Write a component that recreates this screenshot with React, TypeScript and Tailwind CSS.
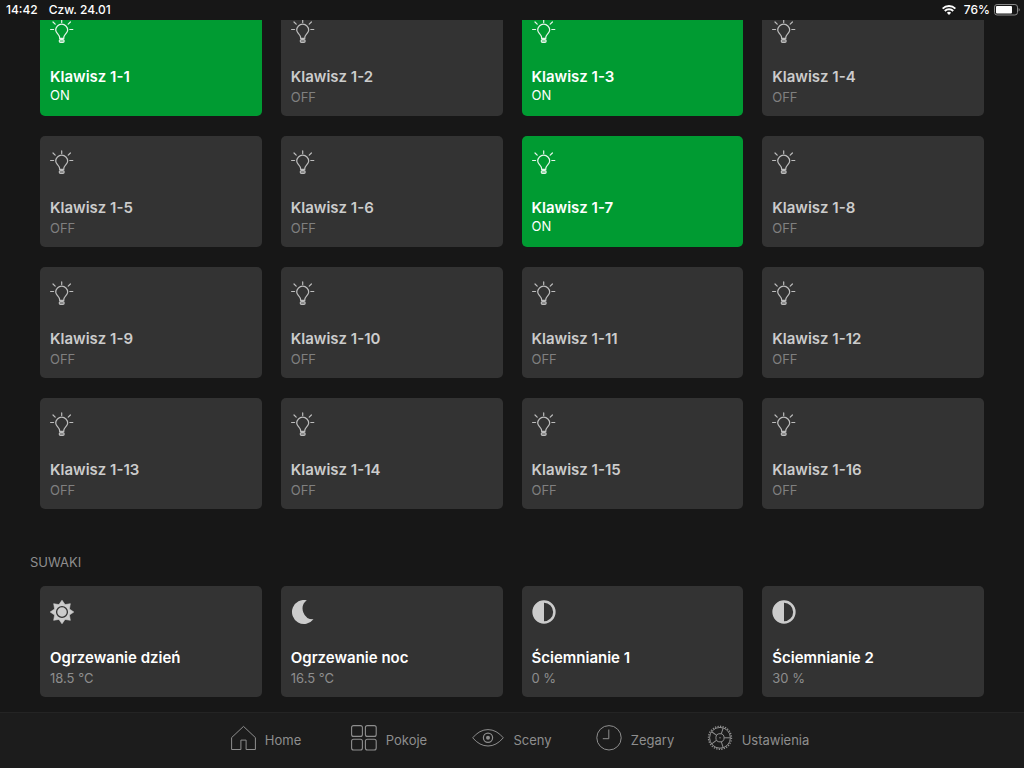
import { useState } from 'react'
import clsx from 'clsx'

interface KeyTile {
  id: number
  name: string
  on: boolean
}

interface SliderTile {
  name: string
  value: string
  icon: () => React.ReactNode
}

const initialKeys: KeyTile[] = Array.from({ length: 16 }, (_, i) => ({
  id: i + 1,
  name: `Klawisz 1-${i + 1}`,
  on: [1, 3, 7].includes(i + 1)
}))

const gearSpokes = [0, 72, 144, 216, 288]

function BulbIcon() {
  return (
    <svg viewBox="0 -0.8 24 24" className="w-6 h-6 opacity-90" fill="none" stroke="currentColor" strokeWidth="1.2" strokeLinecap="round" strokeLinejoin="round">
      <path d="M9.6 18.6v-.8c0-1.5-.9-2.5-2-3.8A6 6.1 0 0 1 5.7 10.4 6 6 0 0 1 17.7 10.4 6 6.1 0 0 1 15.8 14c-1.1 1.3-2 2.3-2 3.8v.8z" />
      <rect x="9.3" y="19.8" width="4.8" height="2.8" rx="1.1" />
      <path d="M11.7.1v2.5M.6 9.7h3M19.8 9.7h3M3 2.2l2.2 2.2M20.4 2.2l-2.2 2.2" />
      <path d="M9.9 21.2h3.6" />
    </svg>
  )
}

function SunIcon() {
  const points = Array.from({ length: 16 }, (_, i) => {
    const r = i % 2 === 0 ? 11.8 : 8
    const a = (i * Math.PI) / 8
    return `${(12 + r * Math.sin(a)).toFixed(2)},${(12 - r * Math.cos(a)).toFixed(2)}`
  }).join(' ')
  return (
    <svg viewBox="0 0 24 24" className="w-6 h-6">
      <polygon points={points} fill="currentColor" stroke="currentColor" strokeWidth="0.6" strokeLinejoin="round" />
      <circle cx="12" cy="12" r="5.4" fill="currentColor" stroke="#333333" strokeWidth="1.3" />
    </svg>
  )
}

function MoonIcon() {
  return (
    <svg viewBox="0 0 24 24" className="w-6 h-6" fill="currentColor">
      <path d="M15.8.3A12 12 0 1 0 22.5 19.3 10.6 10.6 0 0 1 15.8.3z" />
    </svg>
  )
}

function ContrastIcon() {
  return (
    <svg viewBox="0 0 24 24" className="w-6 h-6">
      <circle cx="12" cy="12" r="10.4" fill="none" stroke="currentColor" strokeWidth="2.5" />
      <path d="M12 1a11 11 0 0 0 0 22z" fill="currentColor" />
    </svg>
  )
}

function HomeIcon() {
  return (
    <svg viewBox="0 0 25 26" className="w-[25px] h-[26px]" fill="none" stroke="currentColor">
      <path d="M.6 12.6L12.5 1.4l11.9 11.2v11.9h-9.3v-9.4H9.9v9.4H.6z" />
    </svg>
  )
}

function RoomsIcon() {
  return (
    <svg viewBox="0 0 26 26" className="w-[26px] h-[26px]" fill="none" stroke="currentColor" strokeWidth="1.1">
      <rect x=".6" y=".6" width="10.8" height="10.8" rx="2" />
      <rect x="14.4" y=".6" width="10.8" height="10.8" rx="2" />
      <rect x=".6" y="14.2" width="10.8" height="10.8" rx="2" />
      <rect x="14.4" y="14.2" width="10.8" height="10.8" rx="2" />
    </svg>
  )
}

function EyeIcon() {
  return (
    <svg viewBox="0 0 32 26" className="w-8 h-[26px]" fill="none" stroke="currentColor">
      <path d="M.7 12.8Q7.6 4.6 16 4.6t15.3 8.2Q24.4 21 16 21T.7 12.8z" />
      <circle cx="16" cy="12.8" r="4.6" strokeWidth="1.2" />
      <circle cx="16" cy="12.8" r="2" fill="currentColor" stroke="none" />
    </svg>
  )
}

function ClockIcon() {
  return (
    <svg viewBox="0 0 26 26" className="w-[26px] h-[26px]" fill="none" stroke="currentColor">
      <circle cx="13" cy="12.8" r="12.2" />
      <path d="M12.8 4.5v9.2H6.8" />
    </svg>
  )
}

function GearIcon() {
  return (
    <svg viewBox="0 0 26 26" className="w-[26px] h-[26px]" fill="none" stroke="currentColor">
      <circle cx="13" cy="12.8" r="10.4" />
      <circle cx="13" cy="12.8" r="11.5" strokeWidth="1.4" pathLength="56" strokeDasharray="1 1" />
      <circle cx="13" cy="12.8" r="4.1" />
      <circle cx="13" cy="12.8" r="0.7" fill="currentColor" stroke="none" />
      {gearSpokes.map((angle) => (
        <path key={angle} d="M17.1 12.8h6.2" transform={`rotate(${angle} 13 12.8)`} />
      ))}
    </svg>
  )
}

function WifiIcon() {
  return (
    <svg viewBox="0 0 14 10" className="w-3.5 h-2.5" fill="none" stroke="currentColor" strokeWidth="1.9">
      <path d="M.6 3.7a9 9 0 0 1 12.8 0" />
      <path d="M2.8 6a5.9 5.9 0 0 1 8.4 0" />
      <path d="M7 9.9L4.9 7.8a3 3 0 0 1 4.2 0z" fill="currentColor" stroke="none" />
    </svg>
  )
}

function BatteryIcon() {
  return (
    <svg viewBox="0 0 26 12" className="w-[26px] h-3">
      <rect x=".5" y=".5" width="23" height="10.5" rx="2.6" fill="none" stroke="#8a8a8a" />
      <rect x="2" y="2" width="16" height="7.5" rx="1" fill="#ffffff" />
      <path d="M24.6 4v3.6a2 2 0 0 0 0-3.6z" fill="#8a8a8a" />
    </svg>
  )
}

const sliders: SliderTile[] = [
  { name: 'Ogrzewanie dzień', value: '18.5 °C', icon: SunIcon },
  { name: 'Ogrzewanie noc', value: '16.5 °C', icon: MoonIcon },
  { name: 'Ściemnianie 1', value: '0 %', icon: ContrastIcon },
  { name: 'Ściemnianie 2', value: '30 %', icon: ContrastIcon }
]

const tabs = [
  { label: 'Home', icon: HomeIcon },
  { label: 'Pokoje', icon: RoomsIcon },
  { label: 'Sceny', icon: EyeIcon },
  { label: 'Zegary', icon: ClockIcon },
  { label: 'Ustawienia', icon: GearIcon }
]

export default function App() {
  const [keys, setKeys] = useState(initialKeys)

  const toggleKey = (id: number) => {
    setKeys((prev) => prev.map((k) => (k.id === id ? { ...k, on: !k.on } : k)))
  }

  return (
    <div className="flex flex-col h-screen bg-[#171717] font-['Inter','Liberation_Sans',sans-serif] text-white">
      {/* Status bar */}
      <header className="flex items-center justify-between h-5 shrink-0 pl-1.5 pr-1 text-xs font-medium">
        <div className="flex gap-[11px]">
          <span>14:42</span>
          <span>Czw. 24.01</span>
        </div>
        <div className="flex items-center gap-1">
          <WifiIcon />
          <span className="pl-1">76%</span>
          <BatteryIcon />
        </div>
      </header>

      <main className="flex-1 min-h-0 overflow-hidden">
        {/* Keys, scrolled partly under the status bar */}
        <section className="grid grid-cols-4 gap-x-[19px] gap-y-5 px-10 -mt-[15px]">
          {keys.map((key) => (
            <button
              key={key.id}
              onClick={() => toggleKey(key.id)}
              aria-pressed={key.on}
              className={clsx(
                'flex flex-col items-start h-[111px] rounded-[5px] px-2.5 pt-3.5 text-left',
                key.on ? 'bg-[#009b32] text-white' : 'bg-[#333333] text-[#cccccc]'
              )}
            >
              <BulbIcon />
              <span className="mt-6 text-[15px] leading-5 font-semibold">{key.name}</span>
              <span className={clsx('text-[13px]', key.on ? 'leading-4' : 'leading-5 text-[#808080]')}>
                {key.on ? 'ON' : 'OFF'}
              </span>
            </button>
          ))}
        </section>

        {/* Sliders */}
        <section>
          <h2 className="px-[30px] mt-11 text-[13px] leading-[18px] text-[#8e8e8e]">SUWAKI</h2>
          <div className="grid grid-cols-4 gap-x-[19px] px-10 mt-[15px]">
            {sliders.map(({ name, value, icon: Icon }) => (
              <button
                key={name}
                className="flex flex-col items-start h-[111px] rounded-[5px] bg-[#333333] px-2.5 pt-3.5 text-left text-[#cccccc]"
              >
                <Icon />
                <span className="mt-6 text-[15px] leading-5 font-semibold text-white">{name}</span>
                <span className="text-[13px] leading-5 text-[#8e8e8e]">{value}</span>
              </button>
            ))}
          </div>
        </section>
      </main>

      {/* Tab bar */}
      <nav className="h-14 shrink-0 border-t border-[#242424] bg-[#1c1c1c]">
        <div className="grid grid-cols-5 max-w-[615px] mx-auto pt-3">
          {tabs.map(({ label, icon: Icon }) => (
            <a key={label} href="#" className="flex items-end justify-center gap-[9px] text-[#8e8e8e]">
              <Icon />
              <span className="text-[13px] leading-[22px]">{label}</span>
            </a>
          ))}
        </div>
      </nav>
    </div>
  )
}
